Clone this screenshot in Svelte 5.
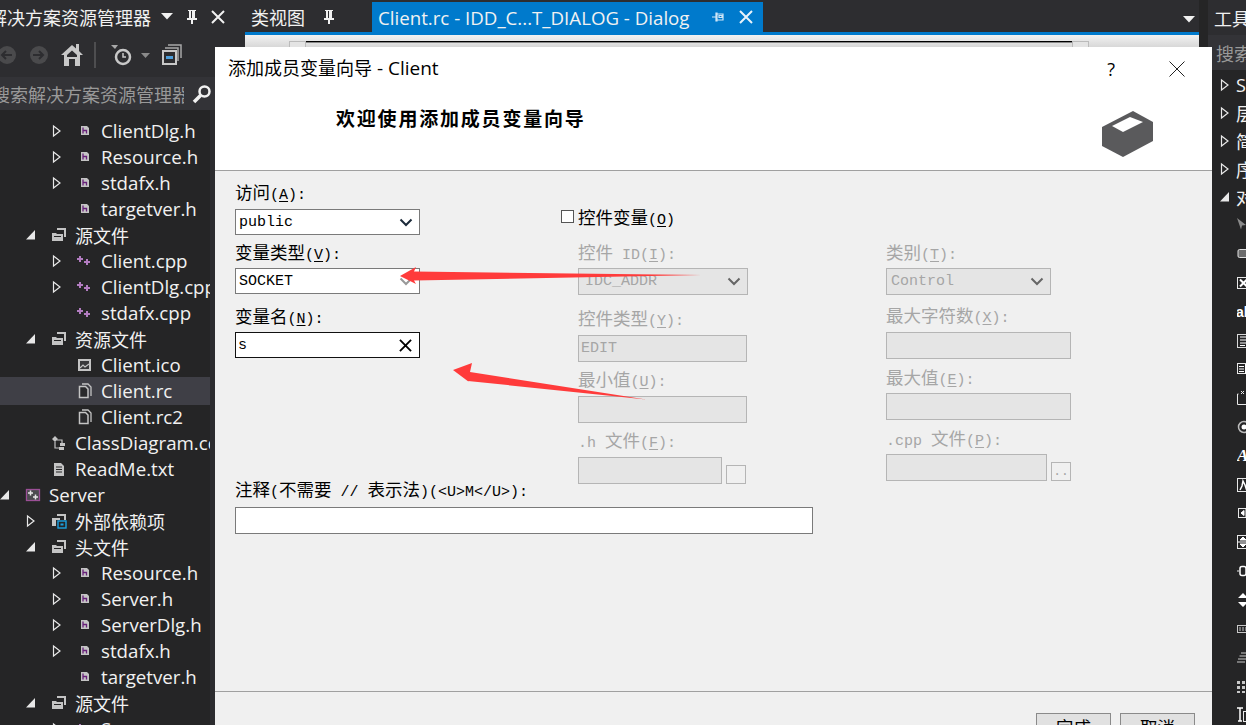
<script>
  const tree = [
    { d: 2, a: 'closed', i: 'h', t: 'ClientDlg.h' },
    { d: 2, a: 'closed', i: 'h', t: 'Resource.h' },
    { d: 2, a: 'closed', i: 'h', t: 'stdafx.h' },
    { d: 2, i: 'h', t: 'targetver.h' },
    { d: 1, a: 'open', i: 'filter', t: '源文件' },
    { d: 2, a: 'closed', i: 'cpp', t: 'Client.cpp' },
    { d: 2, a: 'closed', i: 'cpp', t: 'ClientDlg.cpp' },
    { d: 2, i: 'cpp', t: 'stdafx.cpp' },
    { d: 1, a: 'open', i: 'filter', t: '资源文件' },
    { d: 2, i: 'ico', t: 'Client.ico' },
    { d: 2, i: 'rc', t: 'Client.rc', sel: true },
    { d: 2, i: 'rc', t: 'Client.rc2' },
    { d: 1, i: 'diagram', t: 'ClassDiagram.cd' },
    { d: 1, i: 'txt', t: 'ReadMe.txt' },
    { d: 0, a: 'open', i: 'project', t: 'Server' },
    { d: 1, a: 'closed', i: 'deps', t: '外部依赖项' },
    { d: 1, a: 'open', i: 'filter', t: '头文件' },
    { d: 2, a: 'closed', i: 'h', t: 'Resource.h' },
    { d: 2, a: 'closed', i: 'h', t: 'Server.h' },
    { d: 2, a: 'closed', i: 'h', t: 'ServerDlg.h' },
    { d: 2, a: 'closed', i: 'h', t: 'stdafx.h' },
    { d: 2, i: 'h', t: 'targetver.h' },
    { d: 1, a: 'open', i: 'filter', t: '源文件' },
    { d: 2, a: 'closed', i: 'cpp', t: 'Server.cpp' }
  ]

  const rightTree = [
    { a: 'closed', t: 'Server' },
    { a: 'closed', t: '层次结构' },
    { a: 'closed', t: '简单' },
    { a: 'closed', t: '序列' },
    { a: 'open', t: '对话框编辑器' }
  ]

  const tools = ['pointer', 'button', 'check', 'ab', 'edit', 'list', 'group', 'radio', 'static', 'pic', 'hscroll', 'vscroll', 'slider', 'spin', 'progress', 'hot', 'grid', 'tree']

  const left = [
    { label: '访问(_A):', mt: 0, gap: 6, value: 'public', select: true },
    { label: '变量类型(_V):', mt: 8, gap: 5, value: 'SOCKET', select: true, faded: true },
    { label: '变量名(_N):', mt: 13, gap: 5, value: 's', focus: true }
  ]
  const middle = [
    { label: '控件 ID(_I):', mt: 15, gap: 5, value: 'IDC_ADDR', select: true, off: true, cls: 'wide' },
    { label: '控件类型(_Y):', mt: 14, gap: 6, value: 'EDIT', off: true },
    { label: '最小值(_U):', mt: 8, gap: 6, off: true },
    { label: '.h 文件(_F):', mt: 8, gap: 6, off: true, browse: true }
  ]
  const right = [
    { label: '类别(_T):', mt: 0, gap: 5, value: 'Control', select: true, off: true, cls: 'short' },
    { label: '最大字符数(_X):', mt: 11, gap: 6, off: true },
    { label: '最大值(_E):', mt: 9, gap: 5, off: true },
    { label: '.cpp 文件(_P):', mt: 9, gap: 5, off: true, browse: '..' }
  ]

  // split a label into cjk runs, plain runs and the underlined access key
  function runs(s) {
    const out = []
    for (const part of s.split(/([\u4e00-\u9fff]+|_.)/)) {
      if (!part) continue
      if (part[0] === '_') out.push({ t: part[1], u: true })
      else out.push({ t: part, zh: /[\u4e00-\u9fff]/.test(part) })
    }
    return out
  }

  const isZh = (t) => /[\u4e00-\u9fff]/.test(t)
</script>

{#snippet label(text, off)}
  <div class="lbl" class:off>
    {#each runs(text) as r}
      {#if r.zh}<span class="zh">{r.t}</span>{:else if r.u}<u>{r.t}</u>{:else}{r.t}{/if}
    {/each}
  </div>
{/snippet}

{#snippet arrow(kind)}
  {#if kind === 'closed'}
    <svg class="arr" width="10" height="16" viewBox="0 0 10 16"><path d="M1.500 3 L8 8 L1.500 13 Z" fill="none" stroke="#e8e8e8" stroke-width="1.200" /></svg>
  {:else if kind === 'open'}
    <svg class="arr" width="10" height="16" viewBox="0 0 10 16"><path d="M0 12.500 H9 V3 Z" fill="#e8e8e8" /></svg>
  {/if}
{/snippet}

{#snippet icon(i)}
  <svg class="ic" width="16" height="16" viewBox="0 0 16 16">
    {#if i === 'h'}
      <path d="M4 3h6l2 2v7H4z" fill="#c4c4c4" />
      <path d="M6 4.500v6M6 7.500h3.500v3" fill="none" stroke="#68217a" stroke-width="1.300" />
    {:else if i === 'cpp'}
      <path d="M0 6h6M3 3v6" stroke="#b27cc0" stroke-width="2" />
      <path d="M7 9h6M10 6v6" stroke="#b27cc0" stroke-width="2" />
    {:else if i === 'filter'}
      <path d="M6 1h9v9h-2V3H6z" fill="#c4c4c4" />
      <path d="M1 6h4l1 1h6v7H1z" fill="#c4c4c4" />
      <path d="M3 9h7v1H3z" fill="#252526" />
    {:else if i === 'ico'}
      <rect x="1" y="2" width="13" height="12" fill="#c4c4c4" />
      <rect x="3" y="4" width="9" height="8" fill="#3a3a3c" />
      <path d="M3 11l3-3 2 2 4-3" fill="none" stroke="#c4c4c4" stroke-width="1.200" />
    {:else if i === 'rc'}
      <path d="M5 1h6l3 3v9" fill="none" stroke="#c4c4c4" stroke-width="1.300" />
      <path d="M2.500 3.500h6l2.500 2.500v8.500H2.500z" fill="#2a2a2c" stroke="#c4c4c4" stroke-width="1.500" />
    {:else if i === 'diagram'}
      <path d="M1 4l3-3 3 3-3 3zM9 8h5v3H9zM8 12h5v3H8z" fill="#c4c4c4" />
      <path d="M6 5h5v3M4 7v6h4" fill="none" stroke="#c4c4c4" stroke-width="1.200" />
    {:else if i === 'txt'}
      <path d="M3 2h7l3 3v10H3z" fill="#c4c4c4" />
      <path d="M5 6h6M5 8.500h6M5 11h6" stroke="#252526" stroke-width="1.100" />
    {:else if i === 'project'}
      <rect x="1.500" y="2.500" width="13" height="11" fill="#4b4b4e" stroke="#9b4f96" stroke-width="1.300" />
      <path d="M3 6h5M5.500 3.500v5M8 10h5M10.500 7.500v5" stroke="#e6e6e6" stroke-width="1.500" />
    {:else if i === 'deps'}
      <path d="M6 1h9v6h-2V3H6z" fill="#c4c4c4" />
      <path d="M1 5h8v2H5v6H1z" fill="#c4c4c4" />
      <rect x="7" y="8" width="8" height="7" fill="#252526" stroke="#1ba1e2" stroke-width="1.400" />
      <rect x="9.500" y="10.500" width="3" height="2" fill="#1ba1e2" />
    {/if}
  </svg>
{/snippet}

{#snippet pin(color)}
  <svg class="ic" width="14" height="16" viewBox="0 0 14 16"><path d="M3 1h8v1h-1v7h2v2H8v4H6v-4H2V9h2V2H3zM6 2v7h1V2z" fill={color} /></svg>
{/snippet}

{#snippet cross(color, size)}
  <svg class="ic" width={size} height={size} viewBox="0 0 14 14"><path d="M1 1l12 12M13 1L1 13" stroke={color} stroke-width="2" /></svg>
{/snippet}

{#snippet caret()}
  <svg class="ic" width="12" height="7" viewBox="0 0 12 7"><path d="M0 0h12L6 6.500z" fill="#f1f1f1" /></svg>
{/snippet}

{#snippet field(f)}
  <div style="margin-top:{f.mt}px">{@render label(f.label, f.off)}</div>
  <div class="ctl-row" style="margin-top:{f.gap}px">
    <div class="ctl {f.cls ?? ''}" class:off={f.off} class:focus={f.focus} class:browsing={f.browse} class:pick={f.select}>
      <span class="val">{f.value ?? ''}</span>
      {#if f.select}
        <svg class="chev" width="14" height="9" viewBox="0 0 14 9"><path d="M1.500 1.500L7 7l5.500-5.500" fill="none" stroke={f.off ? '#666' : f.faded ? '#999' : '#1c2a3a'} stroke-width="2" /></svg>
      {/if}
      {#if f.focus}
        <span class="clear">{@render cross('#000', 13)}</span>
      {/if}
    </div>
    {#if f.browse}
      <div class="browse">{f.browse === true ? '' : f.browse}</div>
    {/if}
  </div>
{/snippet}

<div class="ide">
  <aside class="left">
    <div class="title">
      <span class="title-text">解决方案资源管理器</span>
      <span class="t-caret">{@render caret()}</span>
      <span class="t-pin">{@render pin('#f1f1f1')}</span>
      <span class="t-x">{@render cross('#f1f1f1', 14)}</span>
    </div>
    <div class="toolbar">
      <svg width="215" height="26" viewBox="0 0 215 26">
        <circle cx="7" cy="13" r="9" fill="#4a4a4c" /><path d="M12 13H3M6 9l-4 4 4 4" fill="none" stroke="#2d2d30" stroke-width="2" />
        <circle cx="39" cy="13" r="9" fill="#4a4a4c" /><path d="M33 13h10M39 9l4 4-4 4" fill="none" stroke="#2d2d30" stroke-width="2" />
        <path d="M61 13l11-10 4 3.500V2h3v7l4 4h-3v11H64V13z" fill="#c8c8c8" /><path d="M69 24v-7h6v7zM67 13l5-4.500 5 4.500v2H67z" fill="#2d2d30" />
        <rect x="94" y="0" width="2" height="26" fill="#4e4e50" />
        <path d="M111 3h7l-3 4z" fill="#a8a8a8" />
        <circle cx="123" cy="15" r="7" fill="none" stroke="#c8c8c8" stroke-width="2.500" /><path d="M123 11v4h3" fill="none" stroke="#c8c8c8" stroke-width="1.500" />
        <path d="M141 11h9l-4.500 5z" fill="#8a8a8a" />
        <path d="M168 3h13v13M165 6h13v13" fill="none" stroke="#a8a8a8" stroke-width="1.500" />
        <rect x="163" y="9" width="13" height="13" fill="#2d2d30" stroke="#c8c8c8" stroke-width="2" />
        <rect x="166" y="14" width="7" height="3" fill="#4d9fdc" />
      </svg>
    </div>
    <div class="search">
      <span class="search-text">搜索解决方案资源管理器</span>
      <svg class="glass" width="20" height="20" viewBox="0 0 20 20"><circle cx="12.500" cy="7.500" r="5" fill="none" stroke="#f1f1f1" stroke-width="2.500" /><path d="M8.500 11.500L2 18" stroke="#f1f1f1" stroke-width="3.500" /></svg>
    </div>
    <div class="tree-wrap">
      <div class="tree">
        {#each tree as r}
          <div class="row" class:sel={r.sel} style="padding-left:{r.d * 26}px">
            <span class="arr-box">{@render arrow(r.a)}</span>
            {@render icon(r.i)}
            <span class="name" class:cjk={isZh(r.t)}>{r.t}</span>
          </div>
        {/each}
      </div>
      <div class="scroll"></div>
    </div>
  </aside>

  <main class="center">
    <div class="tabs">
      <div class="tab-plain"><span class="cjk">类视图</span>{@render pin('#f1f1f1')}</div>
      <div class="tab-active">
        <span class="tab-name">Client.rc - IDD_C...T_DIALOG - Dialog</span>
        <svg class="tab-pin" width="14" height="14" viewBox="0 0 14 14"><path d="M1 7h4M5 3h1v8H5zM6 4h6v6H6zM8 5.500h3v2H8z" fill="none" stroke="#cfe6f7" stroke-width="1.200" /></svg>
        {@render cross('#e8f3fb', 14)}
      </div>
      <span class="more">{@render caret()}</span>
    </div>
    <div class="blue"></div>
    <div class="ruler"><div class="knob"></div><div class="track"></div><div class="knob"></div></div>
  </main>

  <aside class="right">
    <div class="r-title"><span class="cjk">工具箱</span></div>
    <div class="r-search"><span class="cjk">搜索工具箱</span></div>
    <div class="r-tree">
      {#each rightTree as r}
        <div class="r-row">{@render arrow(r.a)}<span class="name cjk" class:latin={!isZh(r.t)}>{r.t}</span></div>
      {/each}
      {#each tools as t}
        <div class="tool">
          <svg class="ic" width="16" height="16" viewBox="0 0 16 16">
            {#if t === 'pointer'}<path d="M0 1l9 7-4 .500-1 4z" fill="#8a8a8a" />
            {:else if t === 'button'}<rect x="1" y="3.500" width="14" height="8" rx="1.500" fill="#6c6c6c" stroke="#e0e0e0" />
            {:else if t === 'check'}<rect x=".500" y="2.500" width="13" height="11" fill="none" stroke="#e8e8e8" /><path d="M3 4.500l7 7M10 4.500l-7 7" stroke="#fff" stroke-width="2" />
            {:else if t === 'ab'}<text x="-1" y="13" class="ab">ab</text>
            {:else if t === 'edit'}<rect x=".500" y="1.500" width="13" height="13" fill="none" stroke="#d8d8d8" /><path d="M3 4h9M3 7h8M3 10h8M3 12.500h5" stroke="#fff" />
            {:else if t === 'list'}<rect x=".500" y="2.500" width="14" height="10" fill="none" stroke="#e8e8e8" /><path d="M2 5.500h5M2 8h5M2 10.500h5M8.500 3v10" stroke="#fff" />
            {:else if t === 'group'}<path d="M.500 4v10.500h14V4M.500 4h1" fill="none" stroke="#e8e8e8" /><path d="M4 1l3 3M7 1L4 4M9 1l2 2 2-2M11 3v2" stroke="#e8e8e8" />
            {:else if t === 'radio'}<circle cx="7" cy="8" r="5.500" fill="none" stroke="#bbb" stroke-width="1.500" /><circle cx="7" cy="8" r="2.500" fill="#fff" />
            {:else if t === 'static'}<text x="0" y="13" class="serif">A</text>
            {:else if t === 'pic'}<rect x=".500" y="1.500" width="13" height="13" fill="none" stroke="#e8e8e8" /><path d="M3 13l2-4 1-5 2 4 1 3 2-5" fill="none" stroke="#fff" stroke-width="1.500" />
            {:else if t === 'hscroll'}<rect x="1.500" y="3.500" width="13" height="9" fill="none" stroke="#e8e8e8" /><path d="M7 5.500v5L4 8zM9 3v10" fill="#fff" stroke="#fff" />
            {:else if t === 'vscroll'}<rect x=".500" y="1.500" width="11" height="13" fill="none" stroke="#e8e8e8" /><path d="M6 3l3 3H3zM6 13l3-3H3zM1 8h10" fill="#fff" stroke="#fff" />
            {:else if t === 'slider'}<path d="M0 8h2M11 8h5" stroke="#e8e8e8" /><rect x="3" y="3.500" width="6" height="9" rx="2" fill="none" stroke="#fff" stroke-width="1.500" />
            {:else if t === 'spin'}<path d="M6 1l5 5H1zM6 15l5-5H1z" fill="#fff" />
            {:else if t === 'progress'}<rect x=".500" y="4.500" width="14" height="7" fill="none" stroke="#c8c8c8" /><path d="M3 6v4M6 6v4M9 6v4" stroke="#c8c8c8" />
            {:else if t === 'hot'}<path d="M4 4h8M2.500 7h8M1 10h8M0 13h8" stroke="#777" stroke-width="2" />
            {:else if t === 'grid'}<path d="M0 3h3v3H0zM5 3h3v3H5zM0 8h3v3H0zM5 8h3v3H5zM0 13h3v2H0zM5 13h3v2H5z" fill="#c8c8c8" />
            {:else if t === 'tree'}<path d="M0 1h6M3 1v13M1 14h4" stroke="#fff" stroke-width="1.500" /><rect x="6.500" y="4.500" width="8" height="10" fill="none" stroke="#e8e8e8" />
            {/if}
          </svg>
        </div>
      {/each}
    </div>
  </aside>

  <section class="dialog">
    <header class="head">
      <div class="caption">
        <span class="cap-text"><span class="cjk18">添加成员变量向导</span> - Client</span>
        <span class="help">?</span>
        <svg class="ic" width="16" height="16" viewBox="0 0 16 16"><path d="M.500 .500l15 15M15.500 .500l-15 15" stroke="#222" /></svg>
      </div>
      <div class="banner">
        <h1>欢迎使用添加成员变量向导</h1>
        <svg class="ic" width="52" height="47" viewBox="0 0 52 47">
          <path d="M31 0L51 11V30L21 46 0 35V16z" fill="#5a5a5c" />
          <path d="M28 6L41 11 21 21 10 15z" fill="#fff" />
        </svg>
      </div>
    </header>

    <div class="body">
      <div class="col col-left">
        {#each left as f}{@render field(f)}{/each}
        <div class="notes-label">{@render label('注释(不需要 // 表示法)(<U>M</U>):')}</div>
        <div class="ctl notes"></div>
      </div>
      <div class="col col-mid">
        <div class="checkline"><span class="box"></span>{@render label('控件变量(_O)')}</div>
        <div class="mid-inner">
          {#each middle as f}{@render field(f)}{/each}
        </div>
      </div>
      <div class="col col-right">
        {#each right as f}{@render field(f)}{/each}
      </div>
    </div>

    <footer class="foot">
      <button class="btn"><span class="zh">完成</span></button>
      <button class="btn"><span class="zh">取消</span></button>
    </footer>

    <!-- red annotation arrows drawn over the form -->
    <svg class="marks" width="997" height="400" viewBox="0 0 997 400">
      <path d="M185 229L201 220 199 224.500 486 228 199 233.500 201 237z" fill="#ff3b3b" />
      <path d="M238 323L257 316 255 325 431 352.500 253 334 254 335z" fill="#ff3b3b" />
    </svg>
  </section>
</div>

<style>
  :global(body) {
    margin: 0;
    background: #252526;
  }

  .ide {
    position: relative;
    display: flex;
    width: 1246px;
    height: 725px;
    overflow: hidden;
    font-family: "Open Sans", "Noto Sans CJK SC", sans-serif;
    color: #f1f1f1;
    font-size: 18.700px;
  }

  .ic { flex: none; }

  .cjk {
    font-family: "Noto Sans CJK SC", sans-serif;
    font-size: 18px;
  }

  /* left panel */
  .left {
    width: 245px;
    flex: none;
    display: flex;
    flex-direction: column;
    background: #252526;
    overflow: hidden;
  }

  .title {
    height: 33px;
    flex: none;
    display: flex;
    align-items: center;
    background: #2d2d30;
    font-family: "Noto Sans CJK SC", sans-serif;
    font-size: 18px;
    margin-left: -11px;
    white-space: nowrap;
  }

  .title-text { width: 172px; flex: none; }
  .t-caret { width: 21px; flex: none; display: flex; }
  .t-pin { width: 26px; flex: none; display: flex; margin-left: 3px; }
  .t-x { display: flex; }

  .toolbar {
    height: 44px;
    flex: none;
    display: flex;
    align-items: center;
    background: #2d2d30;
  }

  .search {
    height: 33px;
    flex: none;
    width: 215px;
    display: flex;
    align-items: center;
    background: #333337;
    color: #999;
    font-family: "Noto Sans CJK SC", sans-serif;
    font-size: 18px;
    box-shadow: 30px 0 0 #333337;
  }

  .search-text {
    width: 192px;
    flex: none;
    margin-left: -8px;
    white-space: nowrap;
    overflow: hidden;
  }

  .glass { margin-left: 8px; flex: none; }

  .tree-wrap {
    flex: 1;
    display: flex;
    min-height: 0;
  }

  .tree {
    width: 210px;
    flex: none;
    padding-top: 8px;
    overflow: hidden;
  }

  .scroll {
    width: 5px;
    flex: none;
    background: #2c2c2f;
  }

  .row {
    height: 26px;
    display: flex;
    align-items: center;
    white-space: nowrap;
  }

  .row.sel {
    background: #3f3f46;
    height: 28px;
    margin: -1px 0;
  }

  .arr-box {
    width: 25px;
    flex: none;
    display: flex;
  }

  .arr { flex: none; }

  .name {
    margin-left: 8px;
    line-height: 26px;
    color: #f1f1f1;
  }

  .name.cjk { font-size: 18px; }

  /* document tabs */
  .center {
    width: 954px;
    flex: none;
    display: flex;
    flex-direction: column;
    background: #f0f0f0;
  }

  .tabs {
    height: 32px;
    flex: none;
    display: flex;
    align-items: flex-end;
    background: #2d2d30;
  }

  .tab-plain {
    width: 127px;
    flex: none;
    box-sizing: border-box;
    height: 30px;
    padding-left: 6px;
    display: flex;
    align-items: center;
    gap: 17px;
    white-space: nowrap;
  }

  .tab-active {
    width: 391px;
    height: 30px;
    flex: none;
    box-sizing: border-box;
    padding-left: 6px;
    display: flex;
    align-items: center;
    background: #007acc;
    white-space: nowrap;
  }

  .tab-name { width: 333px; flex: none; }
  .tab-pin { width: 14px; margin-right: 14px; flex: none; }

  .more {
    margin-left: auto;
    margin-right: 4px;
    align-self: center;
    display: flex;
    padding-top: 6px;
  }

  .blue {
    height: 3px;
    flex: none;
    background: #007acc;
  }

  .ruler {
    height: 12px;
    flex: none;
    display: flex;
    padding-left: 44px;
    padding-top: 6px;
    box-sizing: border-box;
    background: linear-gradient(#f2f2f2, #d8d8d8);
  }

  .knob {
    width: 17px;
    height: 7px;
    flex: none;
    background: #e4e4e4;
    border: 1px solid #bbb;
    box-sizing: border-box;
  }

  .track {
    width: 766px;
    flex: none;
    height: 1px;
    background: #000;
    border-bottom: 1px solid #888;
  }

  /* right panel */
  .right {
    flex: 1;
    min-width: 0;
    display: flex;
    flex-direction: column;
    background: #252526;
    overflow: hidden;
    white-space: nowrap;
    margin-left: 9px;
  }

  .r-title {
    height: 35px;
    flex: none;
    padding-left: 6px;
    display: flex;
    align-items: center;
    background: #2d2d30;
  }

  .r-search {
    height: 35px;
    flex: none;
    padding-left: 8px;
    display: flex;
    align-items: center;
    background: #333337;
    color: #999;
  }

  .r-tree { padding-top: 1px; }

  .r-row {
    height: 28px;
    padding-left: 12px;
    display: flex;
    align-items: center;
  }

  .r-row .name { margin-left: 6px; }
  .r-row .latin { font-family: "Open Sans", sans-serif; }

  .tool {
    height: 28.800px;
    padding-left: 29px;
    display: flex;
    align-items: center;
  }

  .ab {
    font-family: "Liberation Sans", sans-serif;
    font-weight: bold;
    font-size: 14px;
    fill: #fff;
  }

  .serif {
    font-family: "Liberation Serif", serif;
    font-weight: bold;
    font-style: italic;
    font-size: 17px;
    fill: #fff;
  }

  /* wizard dialog */
  .dialog {
    position: absolute;
    left: 215px;
    top: 47px;
    width: 997px;
    height: 700px;
    background: #f0f0f0;
    color: #000;
    font-family: "Liberation Mono", monospace;
    font-size: 15px;
  }

  .head {
    height: 124px;
    box-sizing: border-box;
    background: #fff;
    border-bottom: 1px solid #a0a0a0;
  }

  .caption {
    height: 44px;
    display: flex;
    align-items: center;
    padding: 0 27px 0 13px;
    font-family: "Open Sans", "Noto Sans CJK SC", sans-serif;
    font-size: 19px;
    white-space: nowrap;
  }

  .cap-text { flex: 1; margin-top: -3px; }

  .cjk18 {
    font-family: "Noto Sans CJK SC", sans-serif;
    font-size: 18px;
  }

  .help { margin-right: 54px; font-size: 18px; }

  .banner {
    display: flex;
    justify-content: space-between;
    padding: 0 58px 0 121px;
  }

  h1 {
    margin: 15px 0 0;
    font-family: "Noto Sans CJK SC", sans-serif;
    font-size: 19px;
    font-weight: 700;
    letter-spacing: 1.800px;
    line-height: 24px;
  }

  .banner svg { margin-top: 20px; }

  .body {
    height: 521px;
    box-sizing: border-box;
    padding: 12px 0 0 20px;
    display: flex;
    border-bottom: 1px solid #a0a0a0;
  }

  .col { flex: none; }
  .col-left { width: 185px; }
  .col-mid { width: 325px; margin-left: 141px; padding-top: 25px; box-sizing: border-box; }
  .mid-inner { margin-left: 17px; width: 170px; }
  .col-right { width: 185px; padding-top: 60px; box-sizing: border-box; }

  .lbl {
    height: 20px;
    line-height: 18px;
    white-space: nowrap;
  }

  .lbl.off { color: #a6a6a6; }

  .zh {
    font-family: "Noto Sans CJK SC", sans-serif;
    font-size: 17.500px;
  }

  u { text-underline-offset: 2px; }

  .checkline {
    display: flex;
    align-items: center;
    gap: 4px;
    height: 20px;
  }

  .box {
    width: 13px;
    height: 13px;
    box-sizing: border-box;
    border: 1px solid #555;
    background: #fff;
    margin-top: -3px;
  }

  .ctl-row {
    display: flex;
    align-items: flex-end;
    gap: 4px;
  }

  .ctl {
    width: 100%;
    height: 26px;
    box-sizing: border-box;
    border: 1px solid #7a7a7a;
    background: #fff;
    display: flex;
    align-items: center;
    padding: 0 6px 0 2px;
    flex: none;
  }

  .ctl.pick { padding-left: 3px; }

  .ctl.off {
    height: 27px;
    width: 169px;
    background: #e5e5e5;
    border-color: #b5b5b5;
    color: #a6a6a6;
  }

  .col-right .ctl.off { width: 185px; }
  .ctl.off.wide { width: 170px; padding-left: 6px; }
  .col-right .ctl.off.short { width: 165px; padding-left: 4px; }
  .ctl.off.browsing { width: 144px; }
  .col-right .ctl.off.browsing { width: 161px; }
  .ctl.focus { border-color: #111; }

  .val { flex: 1; }
  .chev { flex: none; }
  .clear { display: flex; margin-right: 1px; }

  .browse {
    width: 20px;
    height: 19px;
    flex: none;
    box-sizing: border-box;
    border: 1px solid #b5b5b5;
    background: #f0f0f0;
    color: #a6a6a6;
    font-size: 13px;
    line-height: 17px;
    text-align: center;
  }

  .notes-label { margin-top: 122px; }

  .ctl.notes {
    width: 578px;
    height: 27px;
    margin-top: 7px;
  }

  .foot {
    display: flex;
    justify-content: flex-end;
    gap: 9px;
    padding: 21px 17px 0 0;
  }

  .btn {
    width: 75px;
    height: 26px;
    padding: 0;
    border: 1px solid #8a8a8a;
    background: #e1e1e1;
    color: #000;
    font-family: inherit;
  }

  .marks {
    position: absolute;
    left: 0;
    top: 0;
    pointer-events: none;
  }
</style>
